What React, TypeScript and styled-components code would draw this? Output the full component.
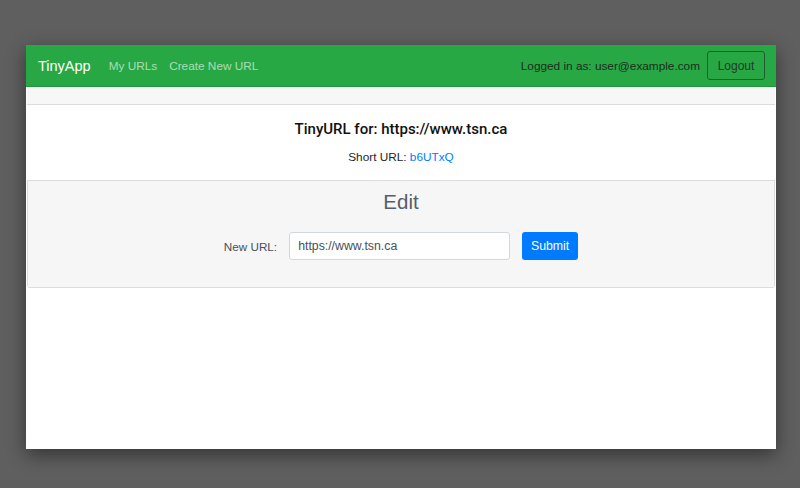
import React from "react";
import styled, { createGlobalStyle } from "styled-components";

const Global = createGlobalStyle`
  html, body { margin: 0; padding: 0; }
  body {
    background: #5f5f5f;
    font-family: "Liberation Sans", Arial, sans-serif;
    width: 800px;
    height: 488px;
    overflow: hidden;
  }
`;

const Stage = styled.div`
  padding: 45px 24px 0 26px;
`;

const Window = styled.div`
  width: 750px;
  height: 404px;
  background: #ffffff;
  box-shadow: 0 6px 18px rgba(0, 0, 0, 0.45);
  display: flex;
  flex-direction: column;
`;

const Navbar = styled.nav`
  height: 42px;
  background: #28a745;
  border-bottom: 1px solid #23963d;
  display: flex;
  align-items: center;
  padding: 0 11px 0 12px;
  box-sizing: border-box;
`;

const Brand = styled.span`
  color: #ffffff;
  font-size: 14.5px;
  margin-right: 18px;
`;

const NavLink = styled.span`
  color: rgba(255, 255, 255, 0.62);
  font-size: 11.8px;
  margin-right: 12px;
`;

const Spacer = styled.div`
  flex: 1;
`;

const UserText = styled.span`
  color: #1d2b20;
  font-size: 11.8px;
  margin-right: 7px;
`;

const OutlineButton = styled.button`
  height: 29px;
  width: 58px;
  background: transparent;
  border: 1px solid #1f5f2f;
  border-radius: 3px;
  color: #1f3a25;
  font-family: inherit;
  font-size: 12px;
  padding: 0;
`;

const Card = styled.section`
  display: flex;
  flex-direction: column;
  margin: 0 1px;
  border: 1px solid #dcdcdc;
  border-top: none;
  border-radius: 0 0 3px 3px;
`;

const CardHeader = styled.div`
  height: 17px;
  background: #f7f7f7;
  border-bottom: 1px solid #dcdcdc;
  margin: 0 -1px;
`;

const CardBody = styled.div`
  background: #ffffff;
  height: 76px;
  display: flex;
  flex-direction: column;
  align-items: center;
  padding-top: 15px;
  box-sizing: border-box;
  border-bottom: 1px solid #dcdcdc;
  margin: 0 -1px;
`;

const Title = styled.h5`
  margin: 0;
  font-family: Roboto, "Liberation Sans", sans-serif;
  font-size: 15px;
  font-weight: 500;
  color: #111;
`;

const ShortLine = styled.p`
  margin: 12px 0 0;
  font-size: 11.8px;
  color: #212529;
`;

const Link = styled.a`
  color: #007bff;
  text-decoration: none;
`;

const CardFooter = styled.div`
  background: #f6f6f6;
  height: 106px;
  display: flex;
  flex-direction: column;
  align-items: center;
  padding-top: 9px;
  box-sizing: border-box;
`;

const EditTitle = styled.h3`
  margin: 0;
  font-size: 20.5px;
  font-weight: 400;
  color: #555e68;
`;

const FormRow = styled.form`
  display: flex;
  align-items: center;
  margin-top: 18px;
`;

const Label = styled.label`
  font-size: 11.7px;
  color: #495057;
  margin-right: 12px;
`;

const Input = styled.input`
  width: 221px;
  height: 28px;
  box-sizing: border-box;
  border: 1px solid #d3d8dd;
  border-radius: 3px;
  padding: 0 8px;
  font-family: inherit;
  font-size: 12.3px;
  color: #495057;
  background: #fff;
  margin-right: 12px;
`;

const Submit = styled.button`
  width: 56px;
  height: 28px;
  background: #007bff;
  border: none;
  border-radius: 3px;
  color: #fff;
  font-family: inherit;
  font-size: 12.3px;
  padding: 0;
`;

export default function App() {
  return (
    <>
      <Global />
      <Stage>
        <Window>
          <Navbar>
            <Brand>TinyApp</Brand>
            <NavLink>My URLs</NavLink>
            <NavLink>Create New URL</NavLink>
            <Spacer />
            <UserText>Logged in as: user@example.com</UserText>
            <OutlineButton>Logout</OutlineButton>
          </Navbar>
          <Card>
            <CardHeader />
            <CardBody>
              <Title>TinyURL for: https://www.tsn.ca</Title>
              <ShortLine>
                Short URL: <Link href="#">b6UTxQ</Link>
              </ShortLine>
            </CardBody>
            <CardFooter>
              <EditTitle>Edit</EditTitle>
              <FormRow onSubmit={(e) => e.preventDefault()}>
                <Label>New URL:</Label>
                <Input defaultValue="https://www.tsn.ca" />
                <Submit type="submit">Submit</Submit>
              </FormRow>
            </CardFooter>
          </Card>
        </Window>
      </Stage>
    </>
  );
}
